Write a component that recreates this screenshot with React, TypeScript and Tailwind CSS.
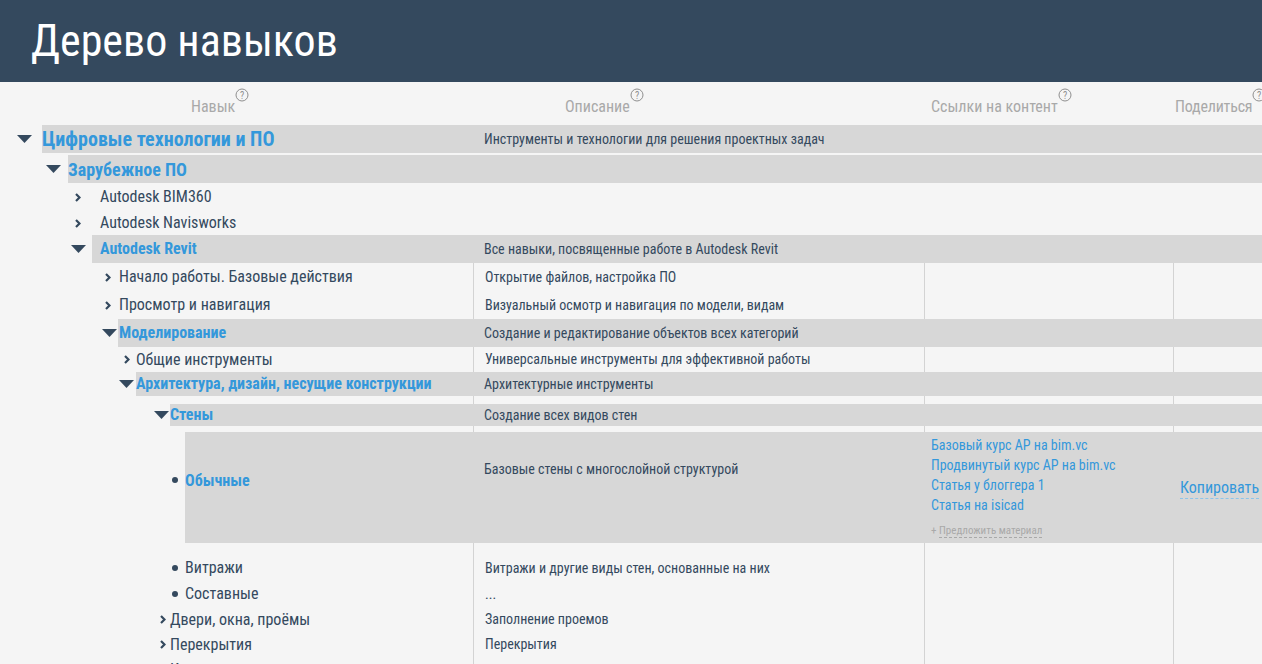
import React from 'react';

type Icon = 'down' | 'right' | 'dot' | 'none';

type Row = {
  kind: 'band' | 'plain' | 'gap';
  h: number;
  icon?: Icon;
  iconX?: number;
  x?: number;
  bandX?: number;
  title?: string;
  titleCls?: string;
  desc?: string;
  lines?: boolean;
};

const rows: Row[] = [
  { kind: 'band', h: 28, icon: 'down', iconX: 17, x: 42, bandX: 42, title: 'Цифровые технологии и ПО', titleCls: 'text-[20px] font-bold', desc: 'Инструменты и технологии для решения проектных задач' },
  { kind: 'gap', h: 2 },
  { kind: 'band', h: 28, icon: 'down', iconX: 46, x: 68, bandX: 68, title: 'Зарубежное ПО', titleCls: 'text-[18px] font-bold' },
  { kind: 'plain', h: 28, icon: 'right', iconX: 75, x: 100, title: 'Autodesk BIM360' },
  { kind: 'plain', h: 24, icon: 'right', iconX: 75, x: 100, title: 'Autodesk Navisworks' },
  { kind: 'band', h: 28, icon: 'down', iconX: 71, x: 100, bandX: 92, title: 'Autodesk Revit', titleCls: 'text-[16px] font-bold', desc: 'Все навыки, посвященные работе в Autodesk Revit' },
  { kind: 'plain', h: 28, icon: 'right', iconX: 105, x: 119, title: 'Начало работы. Базовые действия', desc: 'Открытие файлов, настройка ПО', lines: true },
  { kind: 'plain', h: 28, icon: 'right', iconX: 105, x: 119, title: 'Просмотр и навигация', desc: 'Визуальный осмотр и навигация по модели, видам', lines: true },
  { kind: 'band', h: 28, icon: 'down', iconX: 102, x: 119, bandX: 118, title: 'Моделирование', titleCls: 'text-[16px] font-bold', desc: 'Создание и редактирование объектов всех категорий' },
  { kind: 'plain', h: 25, icon: 'right', iconX: 124, x: 136, title: 'Общие инструменты', desc: 'Универсальные инструменты для эффективной работы', lines: true },
  { kind: 'band', h: 24, icon: 'down', iconX: 119, x: 136, bandX: 136, title: 'Архитектура, дизайн, несущие конструкции', titleCls: 'text-[16px] font-bold', desc: 'Архитектурные инструменты' },
  { kind: 'gap', h: 8, lines: true },
  { kind: 'band', h: 22, icon: 'down', iconX: 154, x: 170, bandX: 170, title: 'Стены', titleCls: 'text-[16px] font-bold', desc: 'Создание всех видов стен' },
  { kind: 'gap', h: 6, lines: true },
];

const rowsAfter: Row[] = [
  { kind: 'gap', h: 12, lines: true },
  { kind: 'plain', h: 26, icon: 'dot', iconX: 172, x: 185, title: 'Витражи', desc: 'Витражи и другие виды стен, основанные на них', lines: true },
  { kind: 'plain', h: 26, icon: 'dot', iconX: 172, x: 185, title: 'Составные', desc: '...', lines: true },
  { kind: 'plain', h: 25, icon: 'right', iconX: 160, x: 170, title: 'Двери, окна, проёмы', desc: 'Заполнение проемов', lines: true },
  { kind: 'plain', h: 25, icon: 'right', iconX: 160, x: 170, title: 'Перекрытия', desc: 'Перекрытия', lines: true },
  { kind: 'plain', h: 26, icon: 'right', iconX: 160, x: 170, title: 'Крыши', desc: 'Крыши и кровли', lines: true },
];

function TreeIcon({ icon }: { icon: Icon }) {
  if (icon === 'down')
    return (
      <svg width="15" height="8" viewBox="0 0 15 8" className="block">
        <path d="M0 0 L15 0 L7.5 8 Z" fill="#34495e" />
      </svg>
    );
  if (icon === 'right')
    return (
      <svg width="6" height="9" viewBox="0 0 6 9" className="block">
        <path d="M1 1 L4.5 4.5 L1 8" fill="none" stroke="#34495e" strokeWidth="2.2" />
      </svg>
    );
  if (icon === 'dot') return <span className="block w-[6px] h-[6px] rounded-full bg-[#34495e]" />;
  return null;
}

function Help() {
  return (
    <svg width="14" height="14" viewBox="0 0 14 14" className="shrink-0 -mt-[7px]">
      <circle cx="7" cy="7" r="6" fill="none" stroke="#8f8f8f" strokeWidth="1" />
      <text x="7" y="10.5" textAnchor="middle" fontSize="10" fill="#8f8f8f" fontFamily="Roboto, sans-serif">?</text>
    </svg>
  );
}

function Cells({ lines, desc }: { lines?: boolean; desc?: string }) {
  const b = lines ? 'border-l border-[#d3d3d3]' : '';
  return (
    <>
      <div className={`w-[451px] shrink-0 h-full flex items-center pl-[11px] text-[14px] text-[#34495e] ${b}`}>{desc}</div>
      <div className={`w-[249px] shrink-0 h-full ${b}`} />
      <div className={`flex-1 h-full ${b}`} />
    </>
  );
}

function TreeRow({ r }: { r: Row }) {
  if (r.kind === 'gap')
    return (
      <div className="flex" style={{ height: r.h }}>
        <div className="w-[473px] shrink-0" />
        <Cells lines={r.lines} />
      </div>
    );

  const left = r.kind === 'band' ? r.bandX! : r.x!;
  const iconPart = (
    <div className="shrink-0 h-full flex items-center" style={{ width: left, paddingLeft: r.iconX }}>
      <TreeIcon icon={r.icon!} />
    </div>
  );

  if (r.kind === 'band')
    return (
      <div className="flex" style={{ height: r.h }}>
        {iconPart}
        <div className="flex-1 flex bg-[#d7d7d7] h-full">
          <div
            className={`shrink-0 h-full flex items-center text-[#3498db] whitespace-nowrap ${r.titleCls}`}
            style={{ width: 473 - left, paddingLeft: r.x! - left }}
          >
            {r.title}
          </div>
          <Cells desc={r.desc} />
        </div>
      </div>
    );

  return (
    <div className="flex" style={{ height: r.h }}>
      {iconPart}
      <div className="shrink-0 h-full flex items-center text-[16px] text-[#34495e] whitespace-nowrap" style={{ width: 473 - left }}>
        {r.title}
      </div>
      <Cells desc={r.desc} lines={r.lines} />
    </div>
  );
}

function LeafRow() {
  const links = ['Базовый курс АР на bim.vc', 'Продвинутый курс АР на bim.vc', 'Статья у блоггера 1', 'Статья на isicad'];
  return (
    <div className="flex h-[111px]">
      <div className="w-[185px] shrink-0 flex items-start pl-[172px] pt-[45px]">
        <TreeIcon icon="dot" />
      </div>
      <div className="flex-1 flex bg-[#d7d7d7] h-full">
        <div className="w-[288px] shrink-0 pt-[39px] text-[16px] font-bold text-[#3498db] leading-5">Обычные</div>
        <div className="w-[451px] shrink-0 pl-[11px] pt-[28px] text-[14px] text-[#34495e] leading-[18px]">
          Базовые стены с многослойной структурой
        </div>
        <div className="w-[249px] shrink-0 pl-[7px] pt-[3px] flex flex-col">
          {links.map((l) => (
            <span key={l} className="text-[14px] text-[#3498db] leading-5">{l}</span>
          ))}
          <span className="mt-[8px] text-[11px] text-[#a9a9a9] leading-4">
            +{' '}
            <span className="border-b border-dashed border-[#a9a9a9]">Предложить материал</span>
          </span>
        </div>
        <div className="flex-1 pl-[7px] pt-[44px] whitespace-nowrap">
          <span className="text-[16px] text-[#3498db] leading-5 border-b border-dashed border-[#8cc4ea] pb-[1px]">Копировать</span>
        </div>
      </div>
    </div>
  );
}

export default function App() {
  return (
    <div className="w-[1262px] h-[664px] overflow-hidden bg-[#f5f5f5] font-['Roboto_Condensed','Roboto',sans-serif] [font-stretch:condensed]">
      <header className="h-[82px] bg-[#34495e] flex items-center pl-[31px]">
        <h1 className="text-[44px] text-white leading-none">Дерево навыков</h1>
      </header>

      <div className="h-[43px] flex text-[16px] text-[#a9a9a9] pt-[13px] whitespace-nowrap">
        <div className="w-[565px] shrink-0 pl-[191px] flex items-start"><span>Навык</span><Help /></div>
        <div className="w-[366px] shrink-0 flex items-start"><span>Описание</span><Help /></div>
        <div className="w-[244px] shrink-0 flex items-start"><span>Ссылки на контент</span><Help /></div>
        <div className="flex-1 min-w-0 flex items-start"><span className="tracking-[-0.2px]">Поделиться</span><Help /></div>
      </div>

      {rows.map((r, i) => (
        <TreeRow key={i} r={r} />
      ))}
      <LeafRow />
      {rowsAfter.map((r, i) => (
        <TreeRow key={i} r={r} />
      ))}
    </div>
  );
}
